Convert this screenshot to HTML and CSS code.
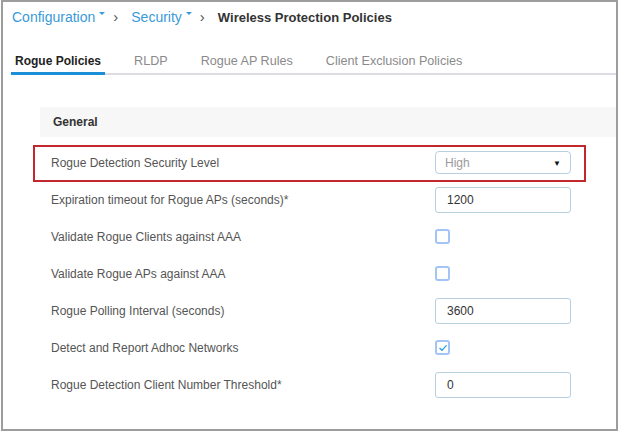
FILE: index.html
```html
<!DOCTYPE html>
<html>
<head>
<meta charset="utf-8">
<link rel="stylesheet" href="styles.css">
</head>
<body>
<div class="frame">
  <nav class="crumbs">
    <span class="crumb">Configuration<i class="caret"></i></span>
    <span class="sep">›</span>
    <span class="crumb">Security<i class="caret"></i></span>
    <span class="sep">›</span>
    <span class="current">Wireless Protection Policies</span>
  </nav>
  <ul class="tabs">
    <li class="tab active">Rogue Policies</li>
    <li class="tab">RLDP</li>
    <li class="tab">Rogue AP Rules</li>
    <li class="tab">Client Exclusion Policies</li>
  </ul>
  <section class="content">
    <div class="panel-head">General</div>
    <div class="form">
      <div class="row flagged">
        <label class="label">Rogue Detection Security Level</label>
        <div class="select"><span class="select-value">High</span><span class="select-arrow">▼</span></div>
      </div>
      <div class="row">
        <label class="label">Expiration timeout for Rogue APs (seconds)*</label>
        <div class="input">1200</div>
      </div>
      <div class="row">
        <label class="label">Validate Rogue Clients against AAA</label>
        <div><span class="checkbox"></span></div>
      </div>
      <div class="row">
        <label class="label">Validate Rogue APs against AAA</label>
        <div><span class="checkbox"></span></div>
      </div>
      <div class="row">
        <label class="label">Rogue Polling Interval (seconds)</label>
        <div class="input">3600</div>
      </div>
      <div class="row">
        <label class="label">Detect and Report Adhoc Networks</label>
        <div><span class="checkbox checked"><svg viewBox="0 0 12 12" width="10" height="10"><path d="M2.2 6.4 L4.8 8.8 L9.8 3.2" fill="none" stroke="#2a9fe4" stroke-width="1.6" stroke-linecap="round" stroke-linejoin="round"/></svg></span></div>
      </div>
      <div class="row">
        <label class="label">Rogue Detection Client Number Threshold*</label>
        <div class="input">0</div>
      </div>
    </div>
  </section>
</div>
</body>
</html>
```
FILE: styles.css
```css
html, body {
  margin: 0;
  padding: 0;
  background: #ffffff;
}
body {
  font-family: "Liberation Sans", Arial, sans-serif;
  color: #333;
}
.frame {
  box-sizing: border-box;
  width: 617px;
  height: 431px;
  margin-left: 1px;
  border: 2px solid #9d9d9d;
  background: #fff;
  overflow: hidden;
}
.crumbs {
  display: flex;
  align-items: baseline;
  padding: 5px 0 0 9px;
  height: 20px;
  line-height: 20px;
  font-size: 14px;
}
.crumb {
  color: #3a9ad9;
  display: inline-flex;
  align-items: baseline;
}
.caret {
  display: inline-block;
  width: 0;
  height: 0;
  border-left: 3px solid transparent;
  border-right: 3px solid transparent;
  border-top: 3px solid #3a9ad9;
  margin-left: 4px;
  position: relative;
  top: -7px;
}
.sep {
  color: #555;
  font-size: 15px;
  margin: 0 13px 0 8px;
}
.current {
  font-weight: bold;
  font-size: 13px;
  color: #333;
}
.tabs {
  list-style: none;
  margin: 26px 0 0 8px;
  padding: 0;
  display: flex;
  gap: 25px;
  border-bottom: 2px solid #dcdde4;
}
.tab {
  padding: 0 4px 3px;
  line-height: 16px;
  font-size: 12.6px;
  color: #8a8a8a;
}
.tab.active {
  font-weight: bold;
  font-size: 12px;
  color: #222;
  border-bottom: 3px solid #1b8fd8;
  margin-bottom: -2px;
}
.content {
  margin: 32px 0 0 37px;
}
.panel-head {
  height: 30px;
  line-height: 30px;
  background: #f7f7f7;
  padding-left: 13px;
  font-size: 12px;
  font-weight: bold;
  color: #333;
}
.form {
  margin-top: 7px;
}
.row {
  position: relative;
  display: grid;
  grid-template-columns: 384px 136px;
  align-items: center;
  height: 37px;
  padding-left: 11px;
}
.row.flagged::after {
  content: "";
  position: absolute;
  left: -7px;
  right: 30px;
  top: 0.5px;
  bottom: -0.5px;
  border: 2px solid #c1272d;
  pointer-events: none;
}
.label {
  font-size: 12px;
  color: #555;
}
.select {
  box-sizing: border-box;
  height: 23px;
  border: 1px solid #b8cfe0;
  border-radius: 4px;
  display: flex;
  align-items: center;
  justify-content: space-between;
  padding: 0 9px 0 9px;
  font-size: 12px;
}
.select-value {
  color: #9a9a9a;
}
.select-arrow {
  font-size: 8px;
  color: #111;
  position: relative;
  top: 1px;
}
.input {
  box-sizing: border-box;
  height: 26px;
  line-height: 24px;
  border: 1px solid #b8cfe0;
  border-radius: 3px;
  padding-left: 11px;
  font-size: 12px;
  color: #333;
}
.checkbox {
  box-sizing: border-box;
  display: flex;
  align-items: center;
  justify-content: center;
  width: 15px;
  height: 15px;
  border: 2px solid #a3c5f5;
  border-radius: 3px;
  background: #fff;
}
```
